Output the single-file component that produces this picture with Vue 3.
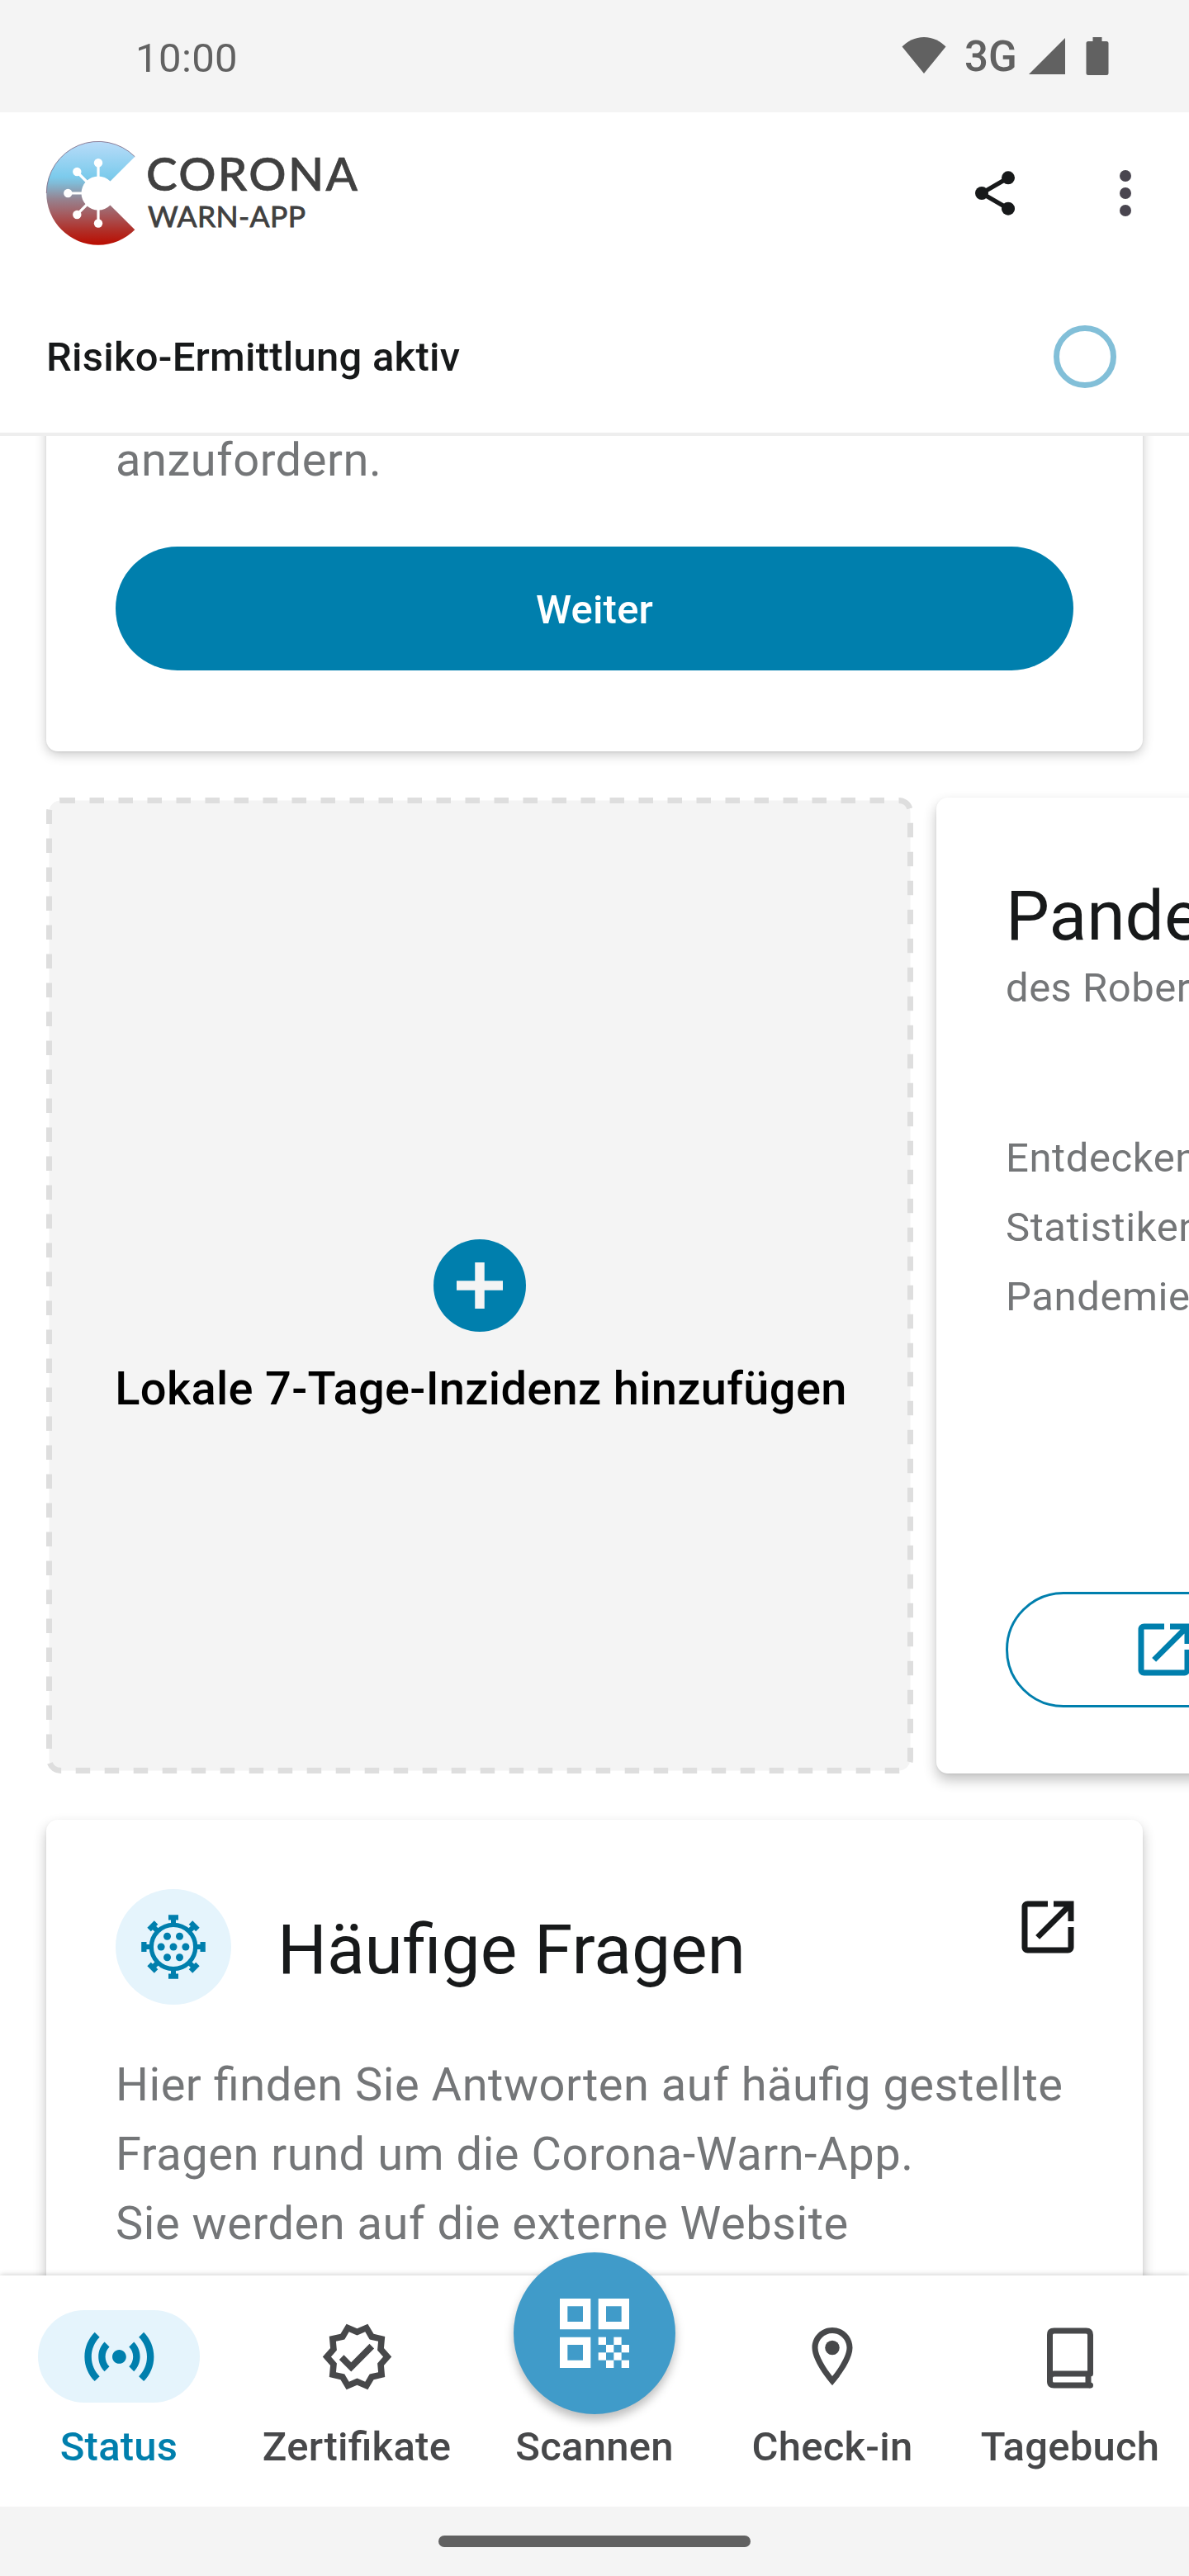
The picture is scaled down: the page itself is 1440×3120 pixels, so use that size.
<script setup>
const spikes = [0, 45, 90, 135, 180, 225, 270, 315]
const dots = [[-7.5, -12.8], [7.5, -12.8], [-14.9, 0], [0, 0], [14.9, 0], [-7.5, 12.8], [7.5, 12.8]]
const qrCells = [[5, 5], [7, 5], [6, 6], [8, 6], [5, 7], [7, 7], [6, 8], [8, 8]]
const openPath = 'M19 19H5V5h7V3H5c-1.11 0-2 .9-2 2v14c0 1.1.89 2 2 2h14c1.1 0 2-.9 2-2v-7h-2v7zM14 3v2h3.59l-9.83 9.83 1.41 1.41L19 6.41V10h2V3h-7z'
</script>

<template>
  <div class="screen">
    <div class="statusbar">
      <span class="time">10:00</span>
      <svg class="wifi" width="54" height="46" viewBox="0 0 54 46"><path d="M27 1C16 1 7 6 .5 12.5L27 45 53.5 12.5C47 6 38 1 27 1z" fill="#616161" /></svg>
      <span class="net">3G</span>
      <svg class="signal" width="44" height="44" viewBox="0 0 44 44"><path d="M0 44L44 0V44z" fill="#616161" /></svg>
      <svg class="battery" width="28" height="46" viewBox="0 0 28 46"><path d="M8.500 0h11v5h5.500a2.500 2.500 0 0 1 2.500 2.500v36a2.500 2.500 0 0 1-2.500 2.500h-22a2.500 2.500 0 0 1-2.500-2.500v-36a2.500 2.500 0 0 1 2.500-2.500h5.500z" fill="#616161" /></svg>
    </div>

    <header class="header">
      <div class="toolbar">
        <svg class="logo" width="400" height="130" viewBox="54 169 400 130">
          <defs>
            <linearGradient id="cwa" x1="0" y1="0" x2="0" y2="1">
              <stop offset="0" stop-color="#b9dcf9" />
              <stop offset=".34" stop-color="#7ccbec" />
              <stop offset=".4" stop-color="#80bcd8" />
              <stop offset=".56" stop-color="#96828f" />
              <stop offset=".7" stop-color="#a55c60" />
              <stop offset=".86" stop-color="#b02f28" />
              <stop offset="1" stop-color="#ba0c00" />
            </linearGradient>
          </defs>
          <path d="M163.300 189.700A62.700 62.700 0 1 0 163.300 278.300L133.500 248.500A20.500 20.500 0 1 1 133.500 219.500z" fill="url(#cwa)" />
          <path d="M163.300 189.700A62.700 62.700 0 0 0 56.300 234" fill="none" stroke="#7d6680" stroke-width=".8" />
          <g stroke="#fff" stroke-width="3.200">
            <path d="M119 216V197M101 234H82M106 221L93 208M106 247L93 260M119 252V270" />
          </g>
          <g fill="#fff">
            <circle cx="119" cy="197.300" r="5.200" /><circle cx="93.300" cy="208" r="5.200" />
            <circle cx="82.300" cy="234" r="5.200" /><circle cx="93.300" cy="260" r="5.200" />
            <circle cx="119" cy="270.500" r="5.200" />
          </g>
          <g class="wordmark">
            <text x="177" y="231" font-size="56.500" textLength="256" lengthAdjust="spacing">CORONA</text>
            <text class="small" x="179" y="275" font-size="35.500" textLength="191" lengthAdjust="spacing">WARN-APP</text>
          </g>
        </svg>
        <svg class="share" width="64" height="64" viewBox="0 0 24 24" fill="#17191a">
          <path d="M18 5L6 12l12 7" fill="none" stroke="#17191a" stroke-width="2" />
          <circle cx="18" cy="5" r="3" /><circle cx="6" cy="12" r="3" /><circle cx="18" cy="19" r="3" />
        </svg>
        <svg class="more" width="14" height="56" viewBox="0 0 14 56" fill="#49454f">
          <circle cx="7" cy="7" r="7" /><circle cx="7" cy="28" r="7" /><circle cx="7" cy="49" r="7" />
        </svg>
      </div>
      <div class="tracing">
        <span>Risiko-Ermittlung aktiv</span>
        <i class="ring"></i>
      </div>
    </header>

    <main class="content">
      <section class="card request">
        <p class="body">anzufordern.</p>
        <button class="primary">Weiter</button>
      </section>

      <div class="tiles">
        <section class="add">
          <svg class="dash" width="1050" height="1182" viewBox="56 966 1050 1182">
            <path d="M73.500 969.500H1088.500A14 14 0 0 1 1102.500 983.500V2130.500A14 14 0 0 1 1088.500 2144.500H73.500A14 14 0 0 1 59.500 2130.500V983.500A14 14 0 0 1 73.500 969.500" fill="#f4f4f4" stroke="#dedede" stroke-width="7" stroke-dasharray="17.500" />
          </svg>
          <svg class="plus" width="112" height="112" viewBox="0 0 112 112">
            <circle cx="56" cy="56" r="56" fill="#007fad" />
            <path d="M28 56H84M56 28V84" stroke="#f4f4f4" stroke-width="11.500" />
          </svg>
          <span class="addlabel">Lokale 7-Tage-Inzidenz hinzufügen</span>
        </section>
        <section class="card radar">
          <h2>Pandemieradar</h2>
          <p class="sub">des Robert Koch-Instituts</p>
          <p class="desc">Entdecken Sie weitere<br />Statistiken zur<br />Pandemie</p>
          <div class="outline">
            <svg width="84" height="84" viewBox="0 0 24 24"><path :d="openPath" fill="#007fad" /></svg>
          </div>
        </section>
      </div>

      <section class="card faq">
        <div class="faqhead">
          <svg class="virus" width="140" height="140" viewBox="-70 -70 140 140" fill="#007fad">
            <circle r="70" fill="#e5f4fc" />
            <circle r="26.700" fill="none" stroke="#007fad" stroke-width="5.300" />
            <path v-for="a in spikes" :key="a" d="M-6-38.800H6v6.300H3V-28H-3v-4.500H-6z" :transform="`rotate(${a})`" />
            <circle v-for="(d, i) in dots" :key="'d' + i" :cx="d[0]" :cy="d[1]" r="4.500" />
          </svg>
          <h2>Häufige Fragen</h2>
          <svg class="open" width="84" height="84" viewBox="0 0 24 24"><path :d="openPath" fill="#17191a" /></svg>
        </div>
        <p class="body">Hier finden Sie Antworten auf häufig gestellte<br />Fragen rund um die Corona-Warn-App.<br />Sie werden auf die externe Website</p>
      </section>
    </main>

    <nav class="nav">
      <a class="item active">
        <span class="pill">
          <svg width="100.800" height="100.800" viewBox="0 0 24 24" fill="currentColor"><path d="M7.760 16.240C6.670 15.160 6 13.660 6 12s.67-3.160 1.760-4.240l1.420 1.420C8.450 9.900 8 10.900 8 12s.45 2.100 1.170 2.830l-1.410 1.410zm8.480 0C17.330 15.160 18 13.660 18 12s-.67-3.160-1.760-4.240l-1.420 1.420C15.550 9.900 16 10.900 16 12s-.45 2.100-1.170 2.830l1.410 1.410zM12 10c-1.100 0-2 .9-2 2s.9 2 2 2 2-.9 2-2-.9-2-2-2zm8 2c0 2.210-.9 4.210-2.350 5.650l1.420 1.420C20.880 17.260 22 14.760 22 12s-1.120-5.260-2.930-7.070l-1.420 1.420C19.100 7.790 20 9.790 20 12zM6.350 6.350L4.930 4.930C3.120 6.740 2 9.240 2 12s1.120 5.260 2.930 7.070l1.420-1.420C4.900 16.210 4 14.210 4 12s.9-4.210 2.350-5.650z" /></svg>
        </span>
        <span class="label">Status</span>
      </a>
      <a class="item">
        <span class="pill">
          <svg width="91" height="91" viewBox="0 0 24 24" fill="currentColor"><path d="M23 12l-2.440-2.790.34-3.690-3.610-.82-1.890-3.200L12 2.960 8.600 1.500 6.710 4.690 3.100 5.500l.34 3.700L1 12l2.440 2.790-.34 3.700 3.610.82L8.600 22.500l3.400-1.470 3.400 1.460 1.890-3.190 3.610-.82-.34-3.690L23 12zm-3.950 1.480l-.56.65.08.85.18 1.950-1.900.43-.84.19-.44.74-.99 1.680-1.780-.77-.8-.34-.79.34-1.780.77-.99-1.670-.44-.74-.84-.19-1.900-.43.18-1.960.08-.85-.56-.65L3.670 12l1.290-1.480.56-.65-.09-.86-.18-1.940 1.900-.43.84-.19.44-.74.99-1.680 1.780.77.8.34.79-.34 1.780-.77.99 1.680.44.74.84.19 1.900.43-.18 1.950-.08.85.56.65 1.290 1.470-1.280 1.480z" /><path d="M10.090 13.750l-2.320-2.330-1.480 1.490 3.800 3.810 7.340-7.360-1.480-1.490z" /></svg>
        </span>
        <span class="label">Zertifikate</span>
      </a>
      <a class="item">
        <span class="pill"></span>
        <span class="label">Scannen</span>
      </a>
      <a class="item">
        <span class="pill">
          <svg width="84" height="84" viewBox="0 0 24 24" fill="currentColor"><path d="M12 2C8.130 2 5 5.130 5 9c0 5.250 7 13 7 13s7-7.750 7-13c0-3.870-3.130-7-7-7zM7 9c0-2.760 2.240-5 5-5s5 2.240 5 5c0 2.880-2.880 7.190-5 9.880C9.920 16.210 7 11.850 7 9z" /><circle cx="12" cy="9" r="2.500" /></svg>
        </span>
        <span class="label">Check-in</span>
      </a>
      <a class="item">
        <span class="pill">
          <svg class="book" width="56" height="74" viewBox="0 -.500 56 74" fill="none" stroke="currentColor" stroke-width="7">
            <path d="M3.500 66V8.500Q3.500 3.500 8.500 3.500H47.500Q52.500 3.500 52.500 8.500V55.500H8.500Q3.500 55.500 3.500 60.500V64.500Q3.500 69.500 8.500 69.500H52.500M50 56V69" stroke-linejoin="round" />
            <path d="M52.500 69.500h0" stroke-linecap="round" />
          </svg>
        </span>
        <span class="label">Tagebuch</span>
      </a>
      <div class="fab">
        <svg width="84" height="84" viewBox="0 0 9 9" fill="#fff">
          <path fill-rule="evenodd" d="M0 0h4v4H0zM1 1v2h2V1zM5 0h4v4H5zM6 1v2h2V1zM0 5h4v4H0zM1 6v2h2V6z" />
          <rect v-for="(c, i) in qrCells" :key="i" :x="c[0]" :y="c[1]" width="1" height="1" />
        </svg>
      </div>
    </nav>
    <div class="gesture"><i></i></div>
  </div>
</template>

<style>
body { margin: 0; background: #fff; }
</style>

<style scoped>
* { box-sizing: border-box; }
.screen {
  width: 1440px; height: 3120px; overflow: hidden; background: #fff;
  display: flex; flex-direction: column;
  font-family: Roboto, "Liberation Sans", sans-serif; color: #17191a;
  font-feature-settings: "liga" 1;
}
h2, p { margin: 0; font-weight: 400; }
svg { display: block; flex: none; }
.statusbar {
  height: 136px; flex: none; background: #f4f4f4; color: #616161;
  display: flex; align-items: flex-start; padding-left: 164px; font-size: 49px; line-height: 57px;
}
.time { margin-top: 42px; width: 927.5px; letter-spacing: .4px; }
.wifi { margin-top: 44px; }
.net { margin: 40px 0 0 22.5px; width: 78px; font-weight: 500; font-size: 51px; }
.signal { margin-top: 46px; }
.battery { margin: 45px 0 0 25px; }

.header { height: 392px; flex: none; border-bottom: 4px solid #eee; background: #fff; position: relative; z-index: 1; }
.toolbar { height: 196px; display: flex; align-items: center; padding-left: 54px; }
.logo { margin-right: 718.5px; }
.wordmark { font-family: Lato, sans-serif; font-weight: 500; fill: #404040; stroke: #404040; stroke-width: .7px; }
.small { font-weight: 400; stroke-width: .8px; }
.more { margin-left: 119.5px; }
.tracing {
  height: 192px; display: flex; justify-content: space-between; align-items: center;
  padding: 8px 88px 0 56px; font-size: 49px; font-weight: 500; letter-spacing: .23px;
}
.ring { width: 76px; height: 76px; border: 7.7px solid #82bfd8; border-radius: 50%; }

.content { height: 2228px; flex: none; overflow: hidden; display: flex; flex-direction: column; gap: 56px; }
.card { background: #fff; border-radius: 14px; box-shadow: 0 4px 14px rgba(0, 0, 0, .21), 0 1px 3px rgba(0, 0, 0, .06); }
.request { margin: -40px 56px 0; height: 422px; flex: none; padding: 45px 84px 0; }
.body { font-size: 56px; line-height: 84px; color: #747678; white-space: nowrap; letter-spacing: .53px; }
.request .body { line-height: 48px; }
.primary {
  display: block; width: 100%; height: 150px; margin-top: 81px; border: 0; border-radius: 75px;
  background: #007fad; color: #fff; font: 500 49px/58px Roboto, sans-serif; padding: 4px 0 0; letter-spacing: .2px;
}
.tiles { display: flex; gap: 28px; padding-left: 56px; height: 1182px; flex: none; }
.add { position: relative; width: 1050px; flex: none; padding-top: 535px; display: flex; flex-direction: column; align-items: center; }
.dash { position: absolute; inset: 0; }
.plus, .addlabel { position: relative; }
.addlabel { margin: 36px 0 0 3px; color: #000; font-size: 56px; line-height: 66px; font-weight: 500; white-space: nowrap; letter-spacing: .32px; }
.radar { width: 1050px; flex: none; padding: 95px 84px 0; white-space: nowrap; box-shadow: 0 8px 16px rgba(0, 0, 0, .24), 0 1px 3px rgba(0, 0, 0, .06); }
.radar h2 { font-size: 84px; line-height: 98px; }
.sub { font-size: 49px; line-height: 58px; margin-top: 9px; color: #747678; letter-spacing: .5px; }
.desc { font-size: 49px; line-height: 84px; margin-top: 135px; color: #747678; letter-spacing: .6px; }
.outline { height: 140px; margin-top: 315px; border: 3.5px solid #007fad; border-radius: 70px; display: flex; align-items: center; padding-left: 147px; }

.faq { margin: 0 56px; height: 700px; flex: none; padding: 84px 84px 0; box-shadow: 0 8px 16px rgba(0, 0, 0, .24), 0 1px 3px rgba(0, 0, 0, .06); }
.faqhead { display: flex; height: 140px; }
.faqhead h2 { margin: 25px 0 0 56px; font-size: 84px; line-height: 98px; flex: 1; white-space: nowrap; }
.open { margin: 3.5px -10.5px 0 0; }
.faq .body { margin-top: 55px; }

.nav { height: 280px; flex: none; display: flex; position: relative; z-index: 2; background: #fff; box-shadow: 0 0 7px rgba(0, 0, 0, .24); color: #47484a; }
.item { width: 288px; display: flex; flex-direction: column; align-items: center; padding-top: 42px; }
.pill { width: 196px; height: 112px; border-radius: 56px; display: flex; align-items: center; justify-content: center; }
.book { margin-top: 3px; }
.label { margin-top: 24.5px; font-size: 49px; line-height: 58px; font-weight: 500; letter-spacing: .25px; }
.active { color: #007fad; }
.active .pill { background: #e5f4fc; }
.fab {
  position: absolute; left: 622px; top: -28px; width: 196px; height: 196px; border-radius: 50%;
  background: #409bc9; box-shadow: 0 7px 12px rgba(0, 0, 0, .26); display: flex; align-items: center; justify-content: center;
}
.gesture { height: 84px; flex: none; background: #f4f4f4; display: flex; justify-content: center; padding-top: 35px; position: relative; z-index: 3; }
.gesture i { width: 378px; height: 14px; border-radius: 7px; background: #616161; }
</style>
